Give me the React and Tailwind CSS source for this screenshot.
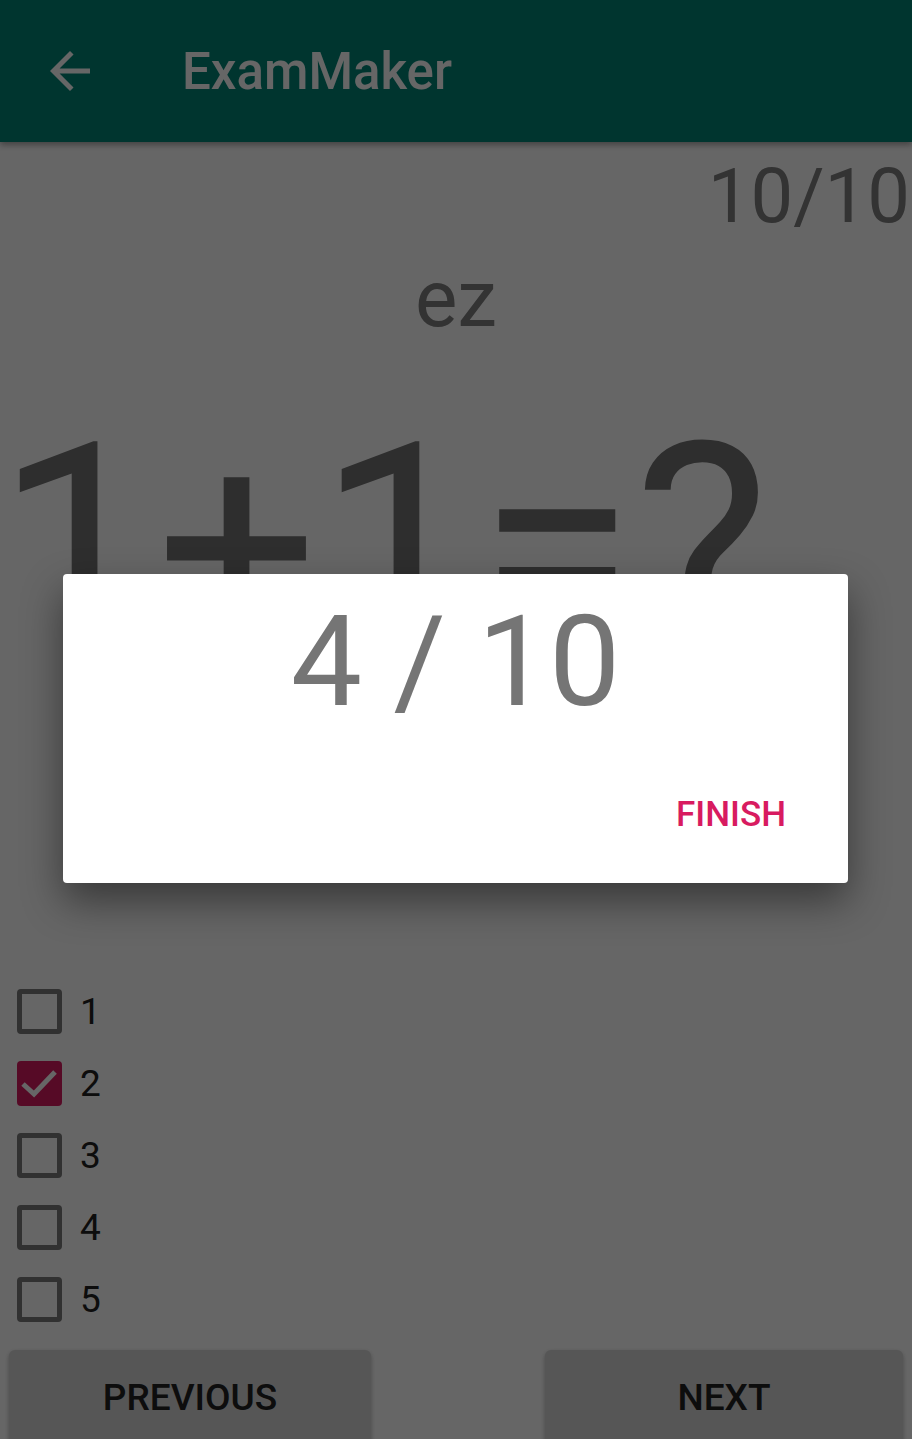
import React from 'react'

const options = [
  { label: '1', checked: false },
  { label: '2', checked: true },
  { label: '3', checked: false },
  { label: '4', checked: false },
  { label: '5', checked: false },
]

function Checkbox({ checked }) {
  if (checked) {
    return (
      <div className="h-[45px] w-[45px] rounded-[4px] bg-[#D81B60] flex items-center justify-center">
        <svg width="45" height="45" viewBox="0 0 45 45">
          <polyline points="6,23 17,33 38,11" fill="none" stroke="#ffffff" strokeWidth="5" />
        </svg>
      </div>
    )
  }
  return <div className="h-[45px] w-[45px] rounded-[4px] border-[5px] border-[#7a7a7a]" />
}

export default function App() {
  return (
    <div className="relative w-[912px] h-[1439px] overflow-hidden bg-white font-['Roboto',sans-serif]">
      {/* app bar */}
      <header className="relative z-10 h-[142px] bg-[#008577] flex items-center shadow-[0_3px_6px_rgba(0,0,0,0.35)]">
        <svg className="ml-[40px]" width="60" height="60" viewBox="0 0 24 24" fill="#ffffff">
          <path d="M20 11H7.83l5.59-5.59L12 4l-8 8 8 8 1.41-1.41L7.83 13H20v-2z" />
        </svg>
        <h1 className="ml-[82px] text-[51px] leading-none font-medium text-white">ExamMaker</h1>
      </header>

      {/* question */}
      <div className="text-right text-[76px] leading-none text-[#7f7f7f] mt-[16px] pr-[2px]">10/10</div>
      <div className="text-center text-[80px] leading-none text-[#7f7f7f] mt-[25px]">ez</div>
      <div className="text-[285px] leading-none text-[#737373] mt-[67px] whitespace-nowrap -ml-[4px]">1+1=?</div>

      {/* answers */}
      <div className="absolute left-0 top-[975px] w-full">
        {options.map((o) => (
          <div key={o.label} className="h-[72px] flex items-center pl-[17px]">
            <Checkbox checked={o.checked} />
            <span className="ml-[18px] text-[37px] leading-none text-[#212121]">{o.label}</span>
          </div>
        ))}
      </div>

      {/* nav buttons */}
      <div className="absolute left-0 top-[1350px] w-full flex justify-between px-[9px]">
        <button className="w-[362px] h-[95px] rounded-[6px] bg-[#d6d6d6] shadow-[0_2px_4px_rgba(0,0,0,0.3)] text-[37px] font-medium text-[#212121]">PREVIOUS</button>
        <button className="w-[358px] h-[95px] rounded-[6px] bg-[#d6d6d6] shadow-[0_2px_4px_rgba(0,0,0,0.3)] text-[37px] font-medium text-[#212121]">NEXT</button>
      </div>

      {/* dim overlay */}
      <div className="absolute inset-0 z-20 bg-black/60" />

      {/* result dialog */}
      <div className="absolute z-30 left-[63px] top-[574px] w-[785px] h-[309px] rounded-[4px] bg-white shadow-[0_18px_40px_rgba(0,0,0,0.45)] flex flex-col">
        <div className="mt-[24px] text-center text-[127px] leading-none text-[#757575]">4 / 10</div>
        <div className="mt-[72px] flex justify-end pr-[62px]">
          <span className="text-[35px] leading-none font-medium text-[#D81B60]">FINISH</span>
        </div>
      </div>
    </div>
  )
}
